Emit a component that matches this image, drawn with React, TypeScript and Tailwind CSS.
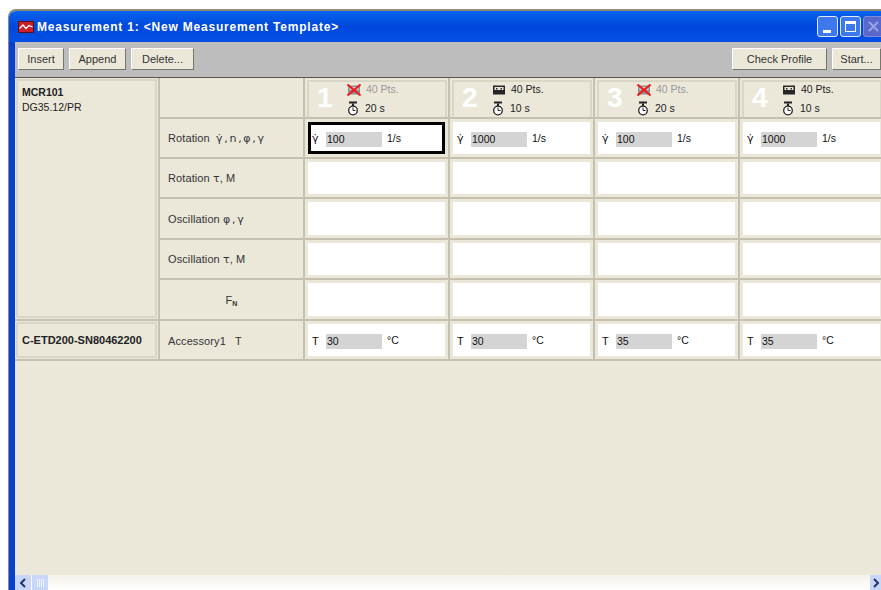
const sans = { fontFamily: '"Liberation Sans", Arial, sans-serif' };
const symbol = { fontFamily: '"DejaVu Sans", sans-serif' };

function ChartIcon() {
  return (
    <svg width="16" height="12" viewBox="0 0 16 12" className="shrink-0">
      <rect x="0.5" y="0.5" width="15" height="11" fill="#c8202a" stroke="#5a1015" />
      <path d="M1.5 7.5 L5 4 L8 7.5 L11 4.5 L14.5 6" fill="none" stroke="#fff" strokeWidth="1.3" />
    </svg>
  );
}

function CassetteIcon({ crossed }: { crossed: boolean }) {
  return (
    <svg width="14" height="12" viewBox="0 0 14 12" className="shrink-0">
      <rect x="1" y="1.5" width="12" height="9" fill={crossed ? '#909090' : '#262626'} />
      <rect x="2.5" y="3" width="9" height="3" fill={crossed ? '#d0d0d0' : '#e8e6d8'} />
      <rect x="4" y="4" width="1.5" height="1.5" fill={crossed ? '#909090' : '#262626'} />
      <rect x="8.5" y="4" width="1.5" height="1.5" fill={crossed ? '#909090' : '#262626'} />
      {crossed && (
        <path d="M0.5 0.5 L13.5 11.5 M13.5 0.5 L0.5 11.5" stroke="#ee1c1c" strokeWidth="2" />
      )}
    </svg>
  );
}

function WatchIcon() {
  return (
    <svg width="12" height="15" viewBox="0 0 12 15" className="shrink-0">
      <rect x="2" y="0.5" width="8" height="2" fill="#222" />
      <path d="M6 2.5 L6 5" stroke="#222" strokeWidth="2" />
      <circle cx="6" cy="9.5" r="4.3" fill="#fff" stroke="#222" strokeWidth="1.3" />
      <path d="M6 9.5 L6 6.5 M6 9.5 L8.5 9.5" stroke="#222" />
    </svg>
  );
}

function Btn({ label, w }: { label: string; w: string }) {
  return (
    <div
      className={`${w} h-[22px] flex items-center justify-center bg-[#ebe8da] text-[11px] text-[#333] border border-t-white border-l-white border-r-[#77766c] border-b-[#77766c] shrink-0`}
    >
      {label}
    </div>
  );
}

function CapButton({ kind }: { kind: 'min' | 'max' | 'close' }) {
  const tone = kind === 'close' ? 'bg-[#5a68cc] border-[#7f8bd8]' : 'bg-[#3d78ec] border-[#dfe8fb]';
  return (
    <div className={`w-[21px] h-[21px] rounded-[3px] border ${tone} flex items-center justify-center shrink-0`}>
      {kind === 'min' && <div className="w-[8px] h-[3px] bg-white mt-[9px] mr-[1px]" />}
      {kind === 'max' && <div className="w-[11px] h-[11px] border border-white border-t-[3px]" />}
      {kind === 'close' && (
        <svg width="11" height="11" viewBox="0 0 11 11">
          <path d="M1 1 L10 10 M10 1 L1 10" stroke="#98a3e4" strokeWidth="2" />
        </svg>
      )}
    </div>
  );
}

const steps = [
  { n: '1', off: true, time: '20 s' },
  { n: '2', off: false, time: '10 s' },
  { n: '3', off: true, time: '20 s' },
  { n: '4', off: false, time: '10 s' },
];

const rate = ['100', '1000', '100', '1000'];
const temps = ['30', '30', '35', '35'];

function StepHeader({ n, off, time }: { n: string; off: boolean; time: string }) {
  return (
    <div className="h-full border-b-2 border-r-2 border-[#c4c1b1] p-[2px] pb-0 pr-[1px]">
      <div className="h-full border-2 border-b-0 border-[#d9d6c6] flex pl-[8px]">
        <div className="w-[30px] text-[28px] leading-[32px] font-bold text-white">{n}</div>
        <div className="flex flex-col text-[10.5px] leading-none">
          <div className={`flex items-center gap-[5px] h-[15px] ${off ? 'text-[#999]' : 'text-[#222]'}`}>
            <CassetteIcon crossed={off} />
            <span>40 Pts.</span>
          </div>
          <div className="flex items-center gap-[6px] h-[17px] mt-[3px] text-[#222]">
            <WatchIcon />
            <span>{time}</span>
          </div>
        </div>
      </div>
    </div>
  );
}

function ValueCell({
  sym,
  value,
  unit,
  focused,
}: {
  sym?: string;
  value?: string;
  unit?: string;
  focused?: boolean;
}) {
  return (
    <div className="h-full border-b-2 border-r-2 border-[#c4c1b1] p-[3px]">
      <div
        className={`h-full bg-white flex items-center pt-[2px] text-[10.5px] text-[#111] ${
          focused ? 'border-[3px] border-black' : 'pl-[3px]'
        }`}
      >
        {value && (
          <>
            <span className="w-[15px] pl-[1px] text-[11px]" style={sym === 'T' ? undefined : symbol}>
              {sym}
            </span>
            <span className="w-[56px] h-[15px] bg-[#d4d4d4] leading-[15px] pl-[1px]">{value}</span>
            <span className="ml-[5px]">{unit}</span>
          </>
        )}
      </div>
    </div>
  );
}

function RowLabel({ children, center }: { children: React.ReactNode; center?: boolean }) {
  return (
    <div
      className={`h-full border-b-2 border-r-2 border-[#c4c1b1] flex items-center pt-[2px] text-[11px] tracking-[0.1px] text-[#333] ${
        center ? 'justify-center' : 'pl-[8px]'
      }`}
    >
      {children}
    </div>
  );
}

const rowLabels: { label: React.ReactNode; center?: boolean; filled?: boolean }[] = [
  {
    label: (
      <span>
        Rotation&nbsp; <span className="tracking-[-0.9px]" style={symbol}>γ̇ , n , φ , γ</span>
      </span>
    ),
    filled: true,
  },
  {
    label: (
      <span>
        Rotation&nbsp;<span style={symbol}>τ</span>, M
      </span>
    ),
  },
  {
    label: (
      <span>
        Oscillation&nbsp;<span className="tracking-[-0.9px]" style={symbol}>φ , γ</span>
      </span>
    ),
  },
  {
    label: (
      <span>
        Oscillation&nbsp;<span style={symbol}>τ</span>, M
      </span>
    ),
  },
  {
    label: (
      <span>
        F<sub className="text-[7px] font-bold">N</sub>
      </span>
    ),
    center: true,
  },
];

export default function App() {
  return (
    <div className="w-[881px] h-[590px] overflow-hidden bg-white pt-[9px] pl-[8px]" style={sans}>
      <div className="w-[900px] h-[581px] flex flex-col border-t-2 border-l border-[#8e8b7c] rounded-tl-[8px] overflow-hidden">
        {/* title bar */}
        <div className="h-[31px] shrink-0 flex items-center pl-[9px] bg-gradient-to-b from-[#0a62ee] via-[#0048dc] to-[#0450e6]">
          <ChartIcon />
          <span className="ml-[3px] text-[12px] font-bold tracking-[0.8px] text-white">
            Measurement 1: &lt;New Measurement Template&gt;
          </span>
          <div className="ml-auto flex gap-[2px] pr-[3px] w-[91px]">
            <CapButton kind="min" />
            <CapButton kind="max" />
            <CapButton kind="close" />
          </div>
        </div>

        <div className="flex-1 flex min-h-0">
          {/* blue window frame */}
          <div className="w-[6px] shrink-0 bg-[#0a3fd6]" />

          <div className="flex-1 min-w-0 flex flex-col bg-[#ebe8da]">
            {/* toolbar */}
            <div className="h-[36px] shrink-0 flex items-start pt-[6px] pl-[3px] bg-[#bdbdbd] border-b border-[#55554f]">
              <div className="flex gap-[5px]">
                <Btn label="Insert" w="w-[46px]" />
                <Btn label="Append" w="w-[57px]" />
                <Btn label="Delete..." w="w-[63px]" />
              </div>
              <div className="ml-[538px] flex gap-[5px]">
                <Btn label="Check Profile" w="w-[95px]" />
                <Btn label="Start..." w="w-[49px]" />
              </div>
            </div>

            {/* measurement grid */}
            <div className="flex-1 min-h-0">
              <div className="grid grid-cols-[145px_145px_145px_145px_145px_145px] grid-rows-[41px_40px_40px_41px_40px_41px_40px]">
                <div className="row-span-6 border-b-2 border-r-2 border-[#c4c1b1] p-[1px]">
                  <div className="h-full border-2 border-[#d9d6c6] pl-[4px] pt-[4px] text-[10.5px] leading-[14.5px] text-[#222]">
                    <div className="font-bold">MCR101</div>
                    <div>DG35.12/PR</div>
                  </div>
                </div>
                <RowLabel>{null}</RowLabel>
                {steps.map((s) => (
                  <StepHeader key={s.n} n={s.n} off={s.off} time={s.time} />
                ))}

                {rowLabels.map((row, r) => (
                  <div key={r} className="contents">
                    <RowLabel center={row.center}>{row.label}</RowLabel>
                    {rate.map((v, c) =>
                      row.filled ? (
                        <ValueCell key={c} sym="γ̇" value={v} unit="1/s" focused={c === 0} />
                      ) : (
                        <ValueCell key={c} />
                      ),
                    )}
                  </div>
                ))}

                <div className="border-b-2 border-r-2 border-[#c4c1b1] p-[1px]">
                  <div className="h-full border-2 border-[#d9d6c6] flex items-center pl-[4px] text-[11px] font-bold text-[#222] whitespace-nowrap">
                    C-ETD200-SN80462200
                  </div>
                </div>
                <RowLabel>
                  <span>Accessory1&nbsp;&nbsp; T</span>
                </RowLabel>
                {temps.map((t, c) => (
                  <ValueCell key={c} sym="T" value={t} unit="°C" />
                ))}
              </div>
            </div>

            {/* horizontal scrollbar */}
            <div className="h-[15px] shrink-0 flex items-stretch bg-gradient-to-b from-[#f3f1e8] to-white">
              <div className="w-[16px] bg-[#c8d6f8] flex items-center justify-center text-[#27346b]">
                <svg width="8" height="10" viewBox="0 0 8 10">
                  <path d="M6 1 L2 5 L6 9" fill="none" stroke="currentColor" strokeWidth="2" />
                </svg>
              </div>
              <div className="w-[16px] ml-[1px] bg-[#c8d6f8] flex items-center justify-center gap-[1px]">
                <div className="w-[1px] h-[8px] bg-[#f0f4ff]" />
                <div className="w-[1px] h-[8px] bg-[#f0f4ff]" />
                <div className="w-[1px] h-[8px] bg-[#f0f4ff]" />
                <div className="w-[1px] h-[8px] bg-[#f0f4ff]" />
              </div>
              <div className="ml-[822px] w-[16px] bg-[#c8d6f8] flex items-center justify-center text-[#27346b]">
                <svg width="8" height="10" viewBox="0 0 8 10" className="-ml-[5px]">
                  <path d="M2 1 L6 5 L2 9" fill="none" stroke="currentColor" strokeWidth="2" />
                </svg>
              </div>
            </div>
          </div>
        </div>
      </div>
    </div>
  );
}
